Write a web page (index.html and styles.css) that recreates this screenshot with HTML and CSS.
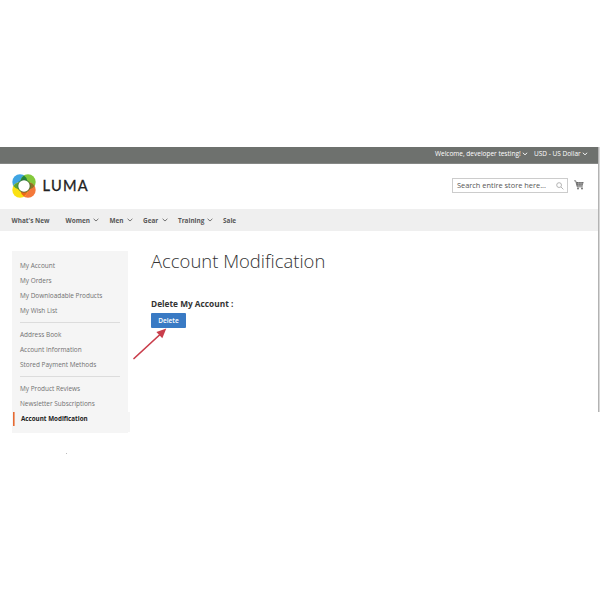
FILE: index.html
```html
<!DOCTYPE html>
<html lang="en">
<head>
<meta charset="utf-8">
<title>Account Modification</title>
<link rel="stylesheet" href="styles.css">
</head>
<body>
<div class="page">
  <div class="panel">
    <span class="welcome">Welcome, developer testing!</span>
    <svg class="chev light" viewBox="0 0 6 4"><path d="M.8 .8 3 2.8 5.2 .8"/></svg>
    <span class="currency">USD - US Dollar</span>
    <svg class="chev light" viewBox="0 0 6 4"><path d="M.8 .8 3 2.8 5.2 .8"/></svg>
  </div>
  <header class="header">
    <svg class="logo" viewBox="0 0 24 24">
      <circle cx="8" cy="8" r="7.7" fill="#3fa5e3"/>
      <circle cx="16" cy="8" r="7.7" fill="#84c93c"/>
      <circle cx="16" cy="16" r="7.7" fill="#f4783a"/>
      <circle cx="8" cy="16" r="7.7" fill="#fbe112"/>
      <path d="M12 1.4A7.7 7.7 0 0 1 15.4 7H8.6A7.7 7.7 0 0 1 12 1.4Z" fill="#21843c"/>
      <path d="M22.6 12A7.7 7.7 0 0 1 17 15.4V8.6A7.7 7.7 0 0 1 22.6 12Z" fill="#8c7426"/>
      <path d="M12 22.6A7.7 7.7 0 0 1 8.6 17H15.4A7.7 7.7 0 0 1 12 22.6Z" fill="#ed6719"/>
      <path d="M1.4 12A7.7 7.7 0 0 1 7 8.6V15.4A7.7 7.7 0 0 1 1.4 12Z" fill="#5ba336"/>
      <circle class="ring" cx="12" cy="12" r="6.7"/>
      <circle cx="12" cy="12" r="5.7" fill="#fff"/>
    </svg>
    <span class="brand">LUMA</span>
    <div class="search">
      <span>Search entire store here...</span>
      <svg class="glass" viewBox="0 0 8 8"><circle cx="3.1" cy="3.1" r="2.4"/><path d="M5 5 7.4 7.4"/></svg>
    </div>
    <svg class="cart" viewBox="0 0 10 10"><path class="wire" d="M.2 .8H1.7L3.2 6.8H8.7"/><path d="M2.1 2H9.6L8.6 5.7H3.1Z"/><path class="grid" d="M3 3.8H9M4.6 2V5.7M6.2 2V5.7M7.8 2V5.7"/><circle cx="4" cy="8.5" r=".9"/><circle cx="8" cy="8.5" r=".9"/></svg>
  </header>
  <nav class="nav">
    <a class="new">What's New</a>
    <a class="women">Women<svg class="chev" viewBox="0 0 6 4"><path d="M.6 .8 3 3 5.4 .8"/></svg></a>
    <a class="men">Men<svg class="chev" viewBox="0 0 6 4"><path d="M.6 .8 3 3 5.4 .8"/></svg></a>
    <a class="gear">Gear<svg class="chev" viewBox="0 0 6 4"><path d="M.6 .8 3 3 5.4 .8"/></svg></a>
    <a class="training">Training<svg class="chev" viewBox="0 0 6 4"><path d="M.6 .8 3 3 5.4 .8"/></svg></a>
    <a class="sale">Sale</a>
  </nav>
  <div class="columns">
    <aside class="sidebar">
      <ul>
        <li>My Account</li>
        <li>My Orders</li>
        <li>My Downloadable Products</li>
        <li>My Wish List</li>
      </ul>
      <ul>
        <li>Address Book</li>
        <li>Account Information</li>
        <li>Stored Payment Methods</li>
      </ul>
      <ul>
        <li>My Product Reviews</li>
        <li>Newsletter Subscriptions</li>
      </ul>
      <div class="current">Account Modification</div>
    </aside>
    <main class="main">
      <h1>Account Modification</h1>
      <h2>Delete My Account :</h2>
      <button class="delete">Delete</button>
      <svg class="arrow" viewBox="0 0 36 34"><path class="shaft" d="M2 31.5 28 7.5"/><path class="head" d="M34.3 1.5 24.4 4.9 30.3 11.3Z"/></svg>
    </main>
  </div>
  <div class="edge"></div>
  <div class="speck"></div>
</div>
</body>
</html>
```
FILE: styles.css
```css
* { box-sizing: border-box; }
body { margin: 0; background: #fff; font-family: "Open Sans", sans-serif; color: #333; }
.page { position: relative; width: 600px; height: 600px; padding-top: 147px; overflow: hidden; white-space: nowrap; }
.panel { display: flex; align-items: center; height: 17px; padding: 0 12px 3px 0; justify-content: flex-end; background: #6e716e; border-bottom: 1px solid #858785; color: #fff; font-size: 6.5px; }
.chev { width: 6px; height: 4px; fill: none; stroke: #666; stroke-width: .9; }
.light { stroke: #fff; margin-left: 1px; }
.welcome { width: 86px; }
.currency { width: 47px; margin-left: 6px; }
.header { display: flex; align-items: center; height: 45px; padding: 0 16px 0 11.5px; }
.logo { width: 24px; height: 24px; margin-top: -2px; }
.ring { fill: #35713c; fill-opacity: .65; }
.brand { width: 60px; margin: -2px 0 0 7px; font: 14.6px/20px Lato, sans-serif; letter-spacing: 1.3px; color: #222; -webkit-text-stroke: .3px #222; }
.search { display: flex; align-items: center; justify-content: space-between; width: 116px; height: 15px; margin-left: auto; padding: 0 3px 0 4px; border: 1px solid #ccc; font-size: 7.4px; color: #555; margin-top: -2px; }
.search span { margin-top: -1px; }
.glass { width: 8px; height: 8px; fill: none; stroke: #aaa; stroke-width: .9; }
.cart { width: 10px; height: 10px; margin: -4px 0 0 6px; fill: #666; }
.cart .wire { fill: none; stroke: #555; stroke-width: .8; }
.cart .grid { fill: none; stroke: #bbb; stroke-width: .5; }
.nav { display: flex; align-items: center; height: 22px; padding: 0 0 0 11.5px; background: #efefef; font-size: 6.4px; font-weight: 700; color: #575757; }
.nav a { display: flex; align-items: center; }
.nav .chev { margin: 0 0 0 auto; }
.new { width: 54px; }
.women { width: 33.5px; margin-right: 10.5px; }
.men { width: 23.5px; margin-right: 10px; }
.gear { width: 25px; margin-right: 10px; }
.training { width: 35px; margin-right: 10px; }
.columns { display: flex; padding: 20px 0 0 12px; }
.sidebar { width: 116px; height: 182px; padding: 6.5px 0 0; background: #f5f5f5; font-size: 6.45px; color: #707070; }
.sidebar ul { list-style: none; margin: 0 8px; padding: 0; }
.sidebar ul + ul { margin-top: 4px; padding-top: 4px; border-top: 1px solid #dcdcdc; }
.sidebar li { height: 15.1px; line-height: 15.1px; }
.current { width: 116.5px; height: 20px; margin: 1px 0 0 1px; padding-left: 8px; background: linear-gradient(#e66a32, #e66a32) 0 0 / 1.6px 14px no-repeat, #f5f5f5; font-size: 6.25px; line-height: 13px; font-weight: 700; color: #222; }
.main { position: relative; margin-left: 23px; }
h1 { margin: -4px 0 0; font-size: 18.45px; line-height: 27px; font-weight: 300; }
h2 { margin: 24px 0 0; font-size: 8.3px; line-height: 12px; font-weight: 700; }
.delete { display: block; width: 35px; height: 15px; margin-top: 3px; padding: 0; border: 0; border-radius: 1px; background: #397ac4; color: #fff; font: 600 6.5px/14px "Open Sans", sans-serif; }
.arrow { position: absolute; left: -19px; top: 76px; width: 36px; height: 34px; }
.shaft { stroke: #c93d4b; stroke-width: 1.7; stroke-linecap: round; }
.head { fill: #c93d4b; }
.edge { position: absolute; left: 598px; top: 147px; width: 2px; height: 265px; background: #b3b3b3; border-right: 1px solid #d8d8d8; }
.speck { position: absolute; left: 66px; top: 453px; width: 1px; height: 1px; background: #bbb; }
```
